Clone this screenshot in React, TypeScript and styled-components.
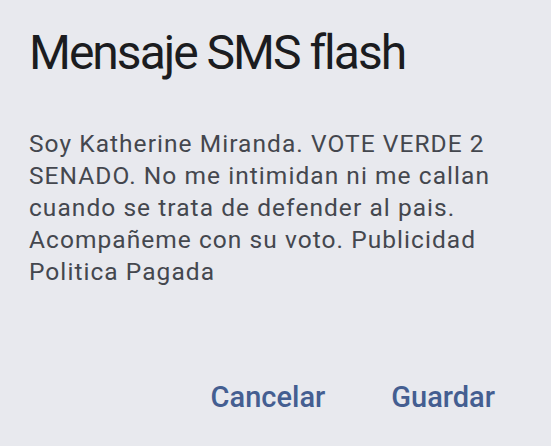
import React from "react";
import styled, { createGlobalStyle } from "styled-components";

const Global = createGlobalStyle`
  html, body { margin: 0; padding: 0; background: #e8e9ee; }
  body { width: 551px; height: 446px; overflow: hidden; font-family: Roboto, "Noto Sans", sans-serif; }
`;

const Dialog = styled.div`
  box-sizing: border-box;
  width: 551px;
  height: 446px;
  background: #e8e9ee;
  padding: 24px 29px 0 29px;
  display: flex;
  flex-direction: column;
`;

const Title = styled.h1`
  margin: 0;
  font-family: Roboto, sans-serif;
  font-weight: 400;
  font-size: 48px;
  letter-spacing: -2px;
  line-height: 58px;
  color: #1b1c20;
`;

const Body = styled.p`
  margin: 46px 0 0 0;
  font-family: Roboto, sans-serif;
  font-size: 24.5px;
  letter-spacing: 1.05px;
  line-height: 32px;
  color: #44474e;
`;

const Actions = styled.div`
  display: flex;
  justify-content: flex-end;
  gap: 66px;
  margin-top: 92px;
  padding-right: 27px;
`;

const ActionButton = styled.button`
  border: none;
  background: none;
  padding: 0;
  font-family: Roboto, sans-serif;
  font-weight: 500;
  font-size: 29px;
  line-height: 34px;
  color: #445e91;
`;

export default function App() {
  return (
    <>
      <Global />
      <Dialog>
        <Title>Mensaje SMS flash</Title>
        <Body>
          Soy Katherine Miranda. VOTE VERDE 2<br />
          SENADO. No me intimidan ni me callan<br />
          cuando se trata de defender al pais.<br />
          Acompañeme con su voto. Publicidad<br />
          Politica Pagada
        </Body>
        <Actions>
          <ActionButton>Cancelar</ActionButton>
          <ActionButton>Guardar</ActionButton>
        </Actions>
      </Dialog>
    </>
  );
}
